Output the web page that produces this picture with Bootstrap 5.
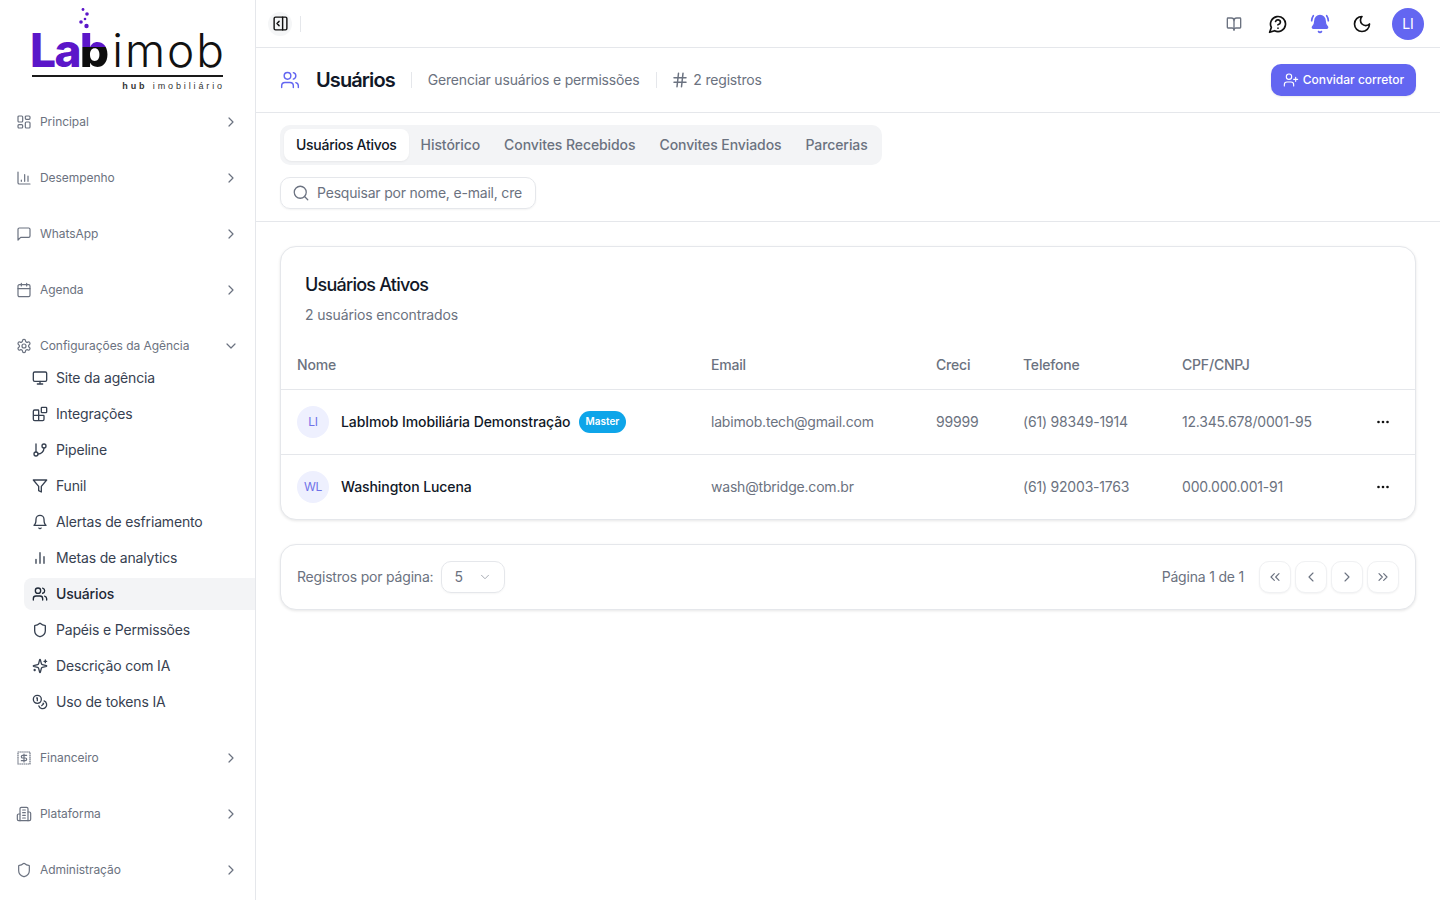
<!DOCTYPE html>
<html lang="pt-BR"><head><meta charset="utf-8"><title>Usuários</title>
<link href="https://cdn.jsdelivr.net/npm/bootstrap@5.3.0/dist/css/bootstrap.min.css" rel="stylesheet">
<style>
:root{--ink:#111827;--mut:#6b7280;--line:#e5e7eb;--ind:#6366f1}
html,body{height:100%}
body{font-family:Inter,"Noto Sans",sans-serif;letter-spacing:-.014em;color:var(--ink);background:#fff;overflow:hidden;font-size:14px}
.ic{width:16px;height:16px;fill:none;stroke:currentColor;stroke-width:2;stroke-linecap:round;stroke-linejoin:round;flex:none}
.tx{margin-bottom:2px}
.side{width:256px;flex:none;border-right:1px solid var(--line);height:100vh}
.logo-area{height:106px;position:relative}
.logo-word{position:absolute;left:30px;top:24px;font-size:46px;line-height:52px;white-space:nowrap;color:#111}
.logo-la{font-weight:800;color:#5b16c9;letter-spacing:-.035em}
.logo-b{font-weight:800;letter-spacing:-.02em;background:linear-gradient(#5b16c9 0 44%,#0d0d0d 44%);-webkit-background-clip:text;background-clip:text;color:transparent}
.logo-rest{font-weight:300;letter-spacing:.042em;margin-left:4px}
.logo-rule{position:absolute;left:32px;top:75px;width:191px;height:2px;background:#1a1a1a}
.logo-sub{position:absolute;right:30px;top:81px;font-size:9px;line-height:11px;letter-spacing:.32em;color:#333;white-space:nowrap;font-family:"Liberation Sans",sans-serif}
.logo-dots{position:absolute;left:78px;top:8px;width:14px;height:22px}
.grp{height:32px;margin:0 8px 24px;padding:0 8px;font-size:12px;color:var(--mut);letter-spacing:-.004em}
.grp .ic{stroke-width:1.8}
.grp.open{margin-bottom:0}
.sub-list{margin:0 0 24px 24px}
.sub-item{height:32px;margin-bottom:4px;padding:0 8px;border-radius:8px 0 0 8px;color:#374151;font-size:14px;letter-spacing:-.012em}
.sub-item:last-child{margin-bottom:0}
.sub-item.on{background:#f3f4f6;color:#1f2937;font-weight:500}
.topbar{height:48px;border-bottom:1px solid var(--line);padding:0 16px 0 12px}
.tog{width:24px;height:24px;border-radius:50%;background:#f5f6f7;color:#111}
.tog .ic{width:17px;height:17px;stroke-width:2}
.vsep{width:1px;height:16px;background:#e5e7eb}
.actions{gap:22px}
.tbi{width:20px;height:20px;stroke-width:2;color:#111}
.tbi-book{width:16px;height:16px;color:#6b7280;margin-right:4px}
.tbi-bell{color:var(--ind)}
.tbi-moon{margin-right:-2px}
.avatar-top{width:32px;height:32px;border-radius:50%;background:var(--ind);color:#fff;font-size:14px}
.head{height:65px;border-bottom:1px solid var(--line);padding:0 24px}
.head h1{font-size:20px;line-height:28px;font-weight:600;margin:0;letter-spacing:-.045em}
.head-ic{width:20px;height:20px;color:var(--ind);margin-right:16px;stroke-width:1.7}
.hsep{width:1px;height:16px;background:#e5e7eb;margin:0 16px}
.hsep-b{margin:0 14px 0 17px}
.hash{width:18px;height:18px;margin-right:4px;color:#6b7280}
.head-sub{color:var(--mut);font-size:14px}
.invite{background:var(--ind);border:0;color:#fff;height:32px;width:145px;border-radius:10px;font-size:12px;font-weight:500;padding:0;letter-spacing:0;box-shadow:0 1px 2px rgba(0,0,0,.08);gap:4px}
.invite .ic{stroke-width:1.7}
.filters{height:109px;border-bottom:1px solid var(--line);padding:12px 24px 0}
.tabbar{background:#f3f4f6;border-radius:10px;padding:4px;height:40px;width:602px}
.tabx{height:32px;padding:0 12px 2px;border:0;background:none;color:var(--mut);font-weight:500;font-size:14px;border-radius:8px;letter-spacing:-.006em;white-space:nowrap}
.tabx.on{background:#fff;color:var(--ink);box-shadow:0 1px 2px rgba(0,0,0,.05);letter-spacing:-.02em}
.searchbox{width:256px;height:32px;margin-top:12px;border:1px solid var(--line);border-radius:10px;padding:0 13px 0 11px;box-shadow:0 1px 2px rgba(0,0,0,.05);color:var(--mut);gap:7px}
.searchbox .ic{width:18px;height:18px;stroke-width:1.7}
.searchbox input{border:0;outline:0;flex:1;min-width:0;font-size:14px;letter-spacing:-.014em;background:none;padding:0 0 2px}
.searchbox input::placeholder{color:var(--mut)}
.cardx{border:1px solid var(--line);border-radius:16px;box-shadow:0 1px 3px rgba(0,0,0,.1);background:#fff}
.wrapz{padding:24px}
.card-top{padding:24px 24px 16px}
.card-top h2{font-size:18px;line-height:28px;font-weight:500;margin:0 0 6px;letter-spacing:-.043em}
.card-top p{margin:0;line-height:20px;color:var(--mut);font-size:14px;letter-spacing:-.01em}
.tbx{margin:0;table-layout:fixed;width:100%;--bs-table-bg:transparent}
.tbx th,.tbx td{padding:0 16px;vertical-align:middle;border-bottom:1px solid var(--line);white-space:nowrap}
.tbx th:last-child,.tbx td:last-child{padding-right:24px}
.tbx th{height:48px;font-weight:500;color:var(--mut);font-size:14px}
.tbx td{height:65px;color:var(--mut);font-size:14px}
.tbx tr:last-child td{border-bottom:0;height:65px}
.c1{width:414px}.c2{width:225px}.c3{width:87px}.c4{width:159px}.c5{width:185px}
.person{width:32px;height:32px;border-radius:50%;background:#eef0fe;color:#6f72e8;font-size:12px;flex:none;margin-right:12px}
.nm{color:var(--ink);font-weight:500;letter-spacing:-.006em}
.tagm{background:#0ea5e9;color:#fff;font-size:10px;font-weight:600;height:22px;padding:0 7px;border-radius:11px;letter-spacing:0}
.dots{display:block;margin-left:auto;width:16px;height:16px;fill:#111;stroke:none}
.pager{height:66px;margin-top:24px;padding:0 16px}
.pick{width:64px;height:32px;border:1px solid var(--line);border-radius:10px;padding:0 12px;box-shadow:0 1px 2px rgba(0,0,0,.04);color:var(--mut)}
.pick .ic{width:14px;height:14px;opacity:.6;stroke-width:1.7}
.page-lbl{margin-right:15px}
.pbtn{width:32px;height:32px;border:1px solid #f0f1f3;border-radius:10px;background:#fff;color:#6b7280;padding:0;box-shadow:0 1px 2px rgba(0,0,0,.05)}
.pbtn .ic{stroke-width:1.7}
</style></head>
<body class="d-flex">
<svg width="0" height="0" class="position-absolute"><defs>
<symbol id="i-right" viewBox="0 0 24 24"><path d="m9 18 6-6-6-6"/></symbol>
<symbol id="i-down" viewBox="0 0 24 24"><path d="m6 9 6 6 6-6"/></symbol>
<symbol id="i-grid" viewBox="0 0 24 24"><rect x="3" y="3" width="7" height="9" rx="1.5"/><rect x="14" y="3" width="7" height="5" rx="1.5"/><rect x="14" y="12" width="7" height="9" rx="1.5"/><rect x="3" y="16" width="7" height="5" rx="1.5"/></symbol>
<symbol id="i-chart" viewBox="0 0 24 24"><path d="M3 3v16a2 2 0 0 0 2 2h16"/><path d="M8 17v-2"/><path d="M13 17V7"/><path d="M18 17V9"/></symbol>
<symbol id="i-msg" viewBox="0 0 24 24"><path d="M21 15a2 2 0 0 1-2 2H7l-4 4V5a2 2 0 0 1 2-2h14a2 2 0 0 1 2 2z"/></symbol>
<symbol id="i-cal" viewBox="0 0 24 24"><rect x="3" y="4" width="18" height="18" rx="2"/><path d="M16 2v4M8 2v4M3 10h18"/></symbol>
<symbol id="i-cog" viewBox="0 0 24 24"><path d="M12.22 2h-.44a2 2 0 0 0-2 2v.18a2 2 0 0 1-1 1.73l-.43.25a2 2 0 0 1-2 0l-.15-.08a2 2 0 0 0-2.73.73l-.22.38a2 2 0 0 0 .73 2.73l.15.1a2 2 0 0 1 1 1.72v.51a2 2 0 0 1-1 1.74l-.15.09a2 2 0 0 0-.73 2.73l.22.38a2 2 0 0 0 2.73.73l.15-.08a2 2 0 0 1 2 0l.43.25a2 2 0 0 1 1 1.73V20a2 2 0 0 0 2 2h.44a2 2 0 0 0 2-2v-.18a2 2 0 0 1 1-1.73l.43-.25a2 2 0 0 1 2 0l.15.08a2 2 0 0 0 2.73-.73l.22-.39a2 2 0 0 0-.73-2.73l-.15-.08a2 2 0 0 1-1-1.74v-.5a2 2 0 0 1 1-1.74l.15-.09a2 2 0 0 0 .73-2.73l-.22-.38a2 2 0 0 0-2.73-.73l-.15.08a2 2 0 0 1-2 0l-.43-.25a2 2 0 0 1-1-1.73V4a2 2 0 0 0-2-2z"/><circle cx="12" cy="12" r="3"/></symbol>
<symbol id="i-mon" viewBox="0 0 24 24"><rect x="2" y="3" width="20" height="14" rx="2"/><path d="M8 21h8M12 17v4"/></symbol>
<symbol id="i-blocks" viewBox="0 0 24 24"><path d="M10 22V7a1 1 0 0 0-1-1H4a2 2 0 0 0-2 2v12a2 2 0 0 0 2 2h12a2 2 0 0 0 2-2v-5a1 1 0 0 0-1-1H2"/><rect x="14" y="2" width="8" height="8" rx="1"/></symbol>
<symbol id="i-branch" viewBox="0 0 24 24"><path d="M6 3v12"/><circle cx="18" cy="6" r="3"/><circle cx="6" cy="18" r="3"/><path d="M18 9a9 9 0 0 1-9 9"/></symbol>
<symbol id="i-funnel" viewBox="0 0 24 24"><polygon points="22 3 2 3 10 12.46 10 19 14 21 14 12.46 22 3"/></symbol>
<symbol id="i-bell" viewBox="0 0 24 24"><path d="M6 8a6 6 0 0 1 12 0c0 7 3 9 3 9H3s3-2 3-9"/><path d="M10.3 21a1.94 1.94 0 0 0 3.4 0"/></symbol>
<symbol id="i-bars" viewBox="0 0 24 24"><path d="M18 20V10M12 20V4M6 20v-6"/></symbol>
<symbol id="i-users" viewBox="0 0 24 24"><path d="M16 21v-2a4 4 0 0 0-4-4H6a4 4 0 0 0-4 4v2"/><circle cx="9" cy="7" r="4"/><path d="M22 21v-2a4 4 0 0 0-3-3.87"/><path d="M16 3.130a4 4 0 0 1 0 7.75"/></symbol>
<symbol id="i-shield" viewBox="0 0 24 24"><path d="M20 13c0 5-3.5 7.5-7.66 8.95a1 1 0 0 1-.67-.01C7.5 20.5 4 18 4 13V6a1 1 0 0 1 1-1c2 0 4.5-1.2 6.24-2.72a1.17 1.17 0 0 1 1.52 0C14.51 3.81 17 5 19 5a1 1 0 0 1 1 1z"/></symbol>
<symbol id="i-spark" viewBox="0 0 24 24"><path d="M9.937 15.5A2 2 0 0 0 8.5 14.063l-6.135-1.582a.5.5 0 0 1 0-.962L8.5 9.936A2 2 0 0 0 9.937 8.5l1.582-6.135a.5.5 0 0 1 .963 0L14.063 8.5A2 2 0 0 0 15.5 9.937l6.135 1.581a.5.5 0 0 1 0 .964L15.5 14.063a2 2 0 0 0-1.437 1.437l-1.582 6.135a.5.5 0 0 1-.963 0z"/><path d="M20 3v4M22 5h-4M4 17v2M5 18H3"/></symbol>
<symbol id="i-coins" viewBox="0 0 24 24"><circle cx="8" cy="8" r="6"/><path d="M18.09 10.37A6 6 0 1 1 10.34 18"/><path d="M7 6h1v4"/><path d="m16.71 13.88.7.71-2.82 2.82"/></symbol>
<symbol id="i-bill" viewBox="0 0 24 24"><rect x="3" y="3" width="18" height="18" stroke-dasharray="2.4 .7" stroke-linecap="butt"/><path d="M16 8h-6a2 2 0 1 0 0 4h4a2 2 0 1 1 0 4H8"/><path d="M12 18V6"/></symbol>
<symbol id="i-bldg" viewBox="0 0 24 24"><path d="M6 22V4a2 2 0 0 1 2-2h8a2 2 0 0 1 2 2v18Z"/><path d="M6 12H4a2 2 0 0 0-2 2v6a2 2 0 0 0 2 2h2"/><path d="M18 9h2a2 2 0 0 1 2 2v9a2 2 0 0 1-2 2h-2"/><path d="M10 6h4M10 10h4M10 14h4M10 18h4"/></symbol>
<symbol id="i-panel" viewBox="0 0 24 24"><rect x="3" y="3" width="18" height="18" rx="2"/><path d="M15 3v18"/><path d="m10 15-3-3 3-3"/></symbol>
<symbol id="i-book" viewBox="0 0 24 24"><path d="M12 7v14"/><path d="M3 18a1 1 0 0 1-1-1V4a1 1 0 0 1 1-1h5a4 4 0 0 1 4 4 4 4 0 0 1 4-4h5a1 1 0 0 1 1 1v13a1 1 0 0 1-1 1h-6a3 3 0 0 0-3 3 3 3 0 0 0-3-3z"/></symbol>
<symbol id="i-help" viewBox="0 0 24 24"><path d="M7.900 20A9 9 0 1 0 4 16.100L2 22Z"/><path d="M9.090 9a3 3 0 0 1 5.830 1c0 2-3 3-3 3"/><path d="M12 17h.01"/></symbol>
<symbol id="i-moon" viewBox="0 0 24 24"><path d="M12 3a6 6 0 0 0 9 9 9 9 0 1 1-9-9Z"/></symbol>
<symbol id="i-uplus" viewBox="0 0 24 24"><path d="M16 21v-2a4 4 0 0 0-4-4H6a4 4 0 0 0-4 4v2"/><circle cx="9" cy="7" r="4"/><path d="M19 8v6M22 11h-6"/></symbol>
<symbol id="i-hash" viewBox="0 0 24 24"><path d="M4 9h16M4 15h16M10 3 8 21M16 3l-2 18"/></symbol>
<symbol id="i-search" viewBox="0 0 24 24"><circle cx="11" cy="11" r="8"/><path d="m21 21-4.3-4.3"/></symbol>
<symbol id="i-dl" viewBox="0 0 24 24"><path d="m11 17-5-5 5-5M18 17l-5-5 5-5"/></symbol>
<symbol id="i-l" viewBox="0 0 24 24"><path d="m15 18-6-6 6-6"/></symbol>
<symbol id="i-dr" viewBox="0 0 24 24"><path d="m6 17 5-5-5-5M13 17l5-5-5-5"/></symbol>
</defs></svg>

<aside class="side">
  <div class="logo-area">
    <div class="logo-word"><span class="logo-la">La</span><span class="logo-b">b</span><span class="logo-rest">imob</span></div>
    <svg class="logo-dots" viewBox="0 0 14 22" fill="#5b16c9"><circle cx="5" cy="1.500" r="1.400"/><circle cx="9" cy="6" r="1.800"/><circle cx="7" cy="11" r="1.300"/><circle cx="3" cy="14" r="1.800"/><circle cx="8.500" cy="18" r="2.200"/></svg>
    <div class="logo-rule"></div>
    <div class="logo-sub"><b>hub</b> imobiliário</div>
  </div>
  <div class="grp d-flex align-items-center gap-2"><svg class="ic"><use href="#i-grid"/></svg><span class="flex-grow-1">Principal</span><svg class="ic"><use href="#i-right"/></svg></div>
  <div class="grp d-flex align-items-center gap-2"><svg class="ic"><use href="#i-chart"/></svg><span class="flex-grow-1">Desempenho</span><svg class="ic"><use href="#i-right"/></svg></div>
  <div class="grp d-flex align-items-center gap-2"><svg class="ic"><use href="#i-msg"/></svg><span class="flex-grow-1">WhatsApp</span><svg class="ic"><use href="#i-right"/></svg></div>
  <div class="grp d-flex align-items-center gap-2"><svg class="ic"><use href="#i-cal"/></svg><span class="flex-grow-1">Agenda</span><svg class="ic"><use href="#i-right"/></svg></div>
  <div class="grp open d-flex align-items-center gap-2"><svg class="ic"><use href="#i-cog"/></svg><span class="flex-grow-1">Configurações da Agência</span><svg class="ic"><use href="#i-down"/></svg></div>
  <div class="sub-list">
    <div class="sub-item d-flex align-items-center gap-2"><svg class="ic"><use href="#i-mon"/></svg><span class="tx">Site da agência</span></div>
    <div class="sub-item d-flex align-items-center gap-2"><svg class="ic"><use href="#i-blocks"/></svg><span class="tx">Integrações</span></div>
    <div class="sub-item d-flex align-items-center gap-2"><svg class="ic"><use href="#i-branch"/></svg><span class="tx">Pipeline</span></div>
    <div class="sub-item d-flex align-items-center gap-2"><svg class="ic"><use href="#i-funnel"/></svg><span class="tx">Funil</span></div>
    <div class="sub-item d-flex align-items-center gap-2"><svg class="ic"><use href="#i-bell"/></svg><span class="tx">Alertas de esfriamento</span></div>
    <div class="sub-item d-flex align-items-center gap-2"><svg class="ic"><use href="#i-bars"/></svg><span class="tx">Metas de analytics</span></div>
    <div class="sub-item on d-flex align-items-center gap-2"><svg class="ic"><use href="#i-users"/></svg><span class="tx">Usuários</span></div>
    <div class="sub-item d-flex align-items-center gap-2"><svg class="ic"><use href="#i-shield"/></svg><span class="tx">Papéis e Permissões</span></div>
    <div class="sub-item d-flex align-items-center gap-2"><svg class="ic"><use href="#i-spark"/></svg><span class="tx">Descrição com IA</span></div>
    <div class="sub-item d-flex align-items-center gap-2"><svg class="ic"><use href="#i-coins"/></svg><span class="tx">Uso de tokens IA</span></div>
  </div>
  <div class="grp d-flex align-items-center gap-2"><svg class="ic"><use href="#i-bill"/></svg><span class="flex-grow-1">Financeiro</span><svg class="ic"><use href="#i-right"/></svg></div>
  <div class="grp d-flex align-items-center gap-2"><svg class="ic"><use href="#i-bldg"/></svg><span class="flex-grow-1">Plataforma</span><svg class="ic"><use href="#i-right"/></svg></div>
  <div class="grp d-flex align-items-center gap-2"><svg class="ic"><use href="#i-shield"/></svg><span class="flex-grow-1">Administração</span><svg class="ic"><use href="#i-right"/></svg></div>
</aside>

<main class="flex-grow-1 d-flex flex-column min-w-0">
  <header class="topbar d-flex align-items-center">
    <div class="tog d-flex align-items-center justify-content-center"><svg class="ic"><use href="#i-panel"/></svg></div>
    <div class="vsep ms-2"></div>
    <div class="ms-auto d-flex align-items-center actions">
      <svg class="ic tbi-book"><use href="#i-book"/></svg>
      <svg class="ic tbi"><use href="#i-help"/></svg>
      <svg class="ic tbi tbi-bell" viewBox="0 0 24 24"><path d="M10.268 21a2 2 0 0 0 3.464 0"/><path d="M22 8c0-2.300-.8-4.300-2-6"/><path fill="#6366f1" d="M3.262 15.326A1 1 0 0 0 4 17h16a1 1 0 0 0 .74-1.673C19.410 13.956 18 12.499 18 8A6 6 0 0 0 6 8c0 4.499-1.411 5.956-2.738 7.326"/><path d="M4 2C2.800 3.700 2 5.700 2 8"/></svg>
      <svg class="ic tbi tbi-moon"><use href="#i-moon"/></svg>
      <div class="avatar-top d-flex align-items-center justify-content-center">LI</div>
    </div>
  </header>
  <section class="head d-flex align-items-center">
    <svg class="ic head-ic"><use href="#i-users"/></svg>
    <h1>Usuários</h1><div class="hsep"></div>
    <span class="head-sub tx">Gerenciar usuários e permissões</span><div class="hsep hsep-b"></div>
    <svg class="ic hash"><use href="#i-hash"/></svg><span class="head-sub tx">2 registros</span>
    <button class="btn invite ms-auto d-flex align-items-center justify-content-center"><svg class="ic"><use href="#i-uplus"/></svg>Convidar corretor</button>
  </section>
  <section class="filters">
    <div class="tabbar d-flex">
      <button class="tabx on">Usuários Ativos</button><button class="tabx">Histórico</button><button class="tabx">Convites Recebidos</button><button class="tabx">Convites Enviados</button><button class="tabx">Parcerias</button>
    </div>
    <div class="searchbox d-flex align-items-center"><svg class="ic"><use href="#i-search"/></svg><input placeholder="Pesquisar por nome, e-mail, creci..." aria-label="Pesquisar"></div>
  </section>
  <div class="wrapz">
    <div class="cardx overflow-hidden">
      <div class="card-top"><h2>Usuários Ativos</h2><p>2 usuários encontrados</p></div>
      <table class="table tbx">
        <colgroup><col class="c1"><col class="c2"><col class="c3"><col class="c4"><col class="c5"><col></colgroup>
        <thead><tr><th>Nome</th><th>Email</th><th>Creci</th><th>Telefone</th><th>CPF/CNPJ</th><th></th></tr></thead>
        <tbody>
          <tr><td><div class="d-flex align-items-center"><span class="person d-flex align-items-center justify-content-center">LI</span><span class="nm">LabImob Imobiliária Demonstração</span><span class="tagm d-inline-flex align-items-center ms-2">Master</span></div></td><td>labimob.tech@gmail.com</td><td>99999</td><td>(61) 98349-1914</td><td>12.345.678/0001-95</td><td><svg class="dots" viewBox="0 0 16 16"><circle cx="3.500" cy="8" r="1.300"/><circle cx="8" cy="8" r="1.300"/><circle cx="12.500" cy="8" r="1.300"/></svg></td></tr>
          <tr><td><div class="d-flex align-items-center"><span class="person d-flex align-items-center justify-content-center">WL</span><span class="nm">Washington Lucena</span></div></td><td>wash@tbridge.com.br</td><td></td><td>(61) 92003-1763</td><td>000.000.001-91</td><td><svg class="dots" viewBox="0 0 16 16"><circle cx="3.500" cy="8" r="1.300"/><circle cx="8" cy="8" r="1.300"/><circle cx="12.500" cy="8" r="1.300"/></svg></td></tr>
        </tbody>
      </table>
    </div>
    <div class="cardx pager d-flex align-items-center">
      <span class="head-sub tx">Registros por página:</span>
      <div class="pick d-flex align-items-center justify-content-between ms-2"><span class="tx">5</span><svg class="ic"><use href="#i-down"/></svg></div>
      <span class="head-sub tx ms-auto page-lbl">Página 1 de 1</span>
      <div class="d-flex gap-1">
        <button class="btn pbtn d-flex align-items-center justify-content-center"><svg class="ic"><use href="#i-dl"/></svg></button>
        <button class="btn pbtn d-flex align-items-center justify-content-center"><svg class="ic"><use href="#i-l"/></svg></button>
        <button class="btn pbtn d-flex align-items-center justify-content-center"><svg class="ic"><use href="#i-right"/></svg></button>
        <button class="btn pbtn d-flex align-items-center justify-content-center"><svg class="ic"><use href="#i-dr"/></svg></button>
      </div>
    </div>
  </div>
</main>
<script src="https://cdn.jsdelivr.net/npm/bootstrap@5.3.0/dist/js/bootstrap.bundle.min.js"></script>
</body></html>
